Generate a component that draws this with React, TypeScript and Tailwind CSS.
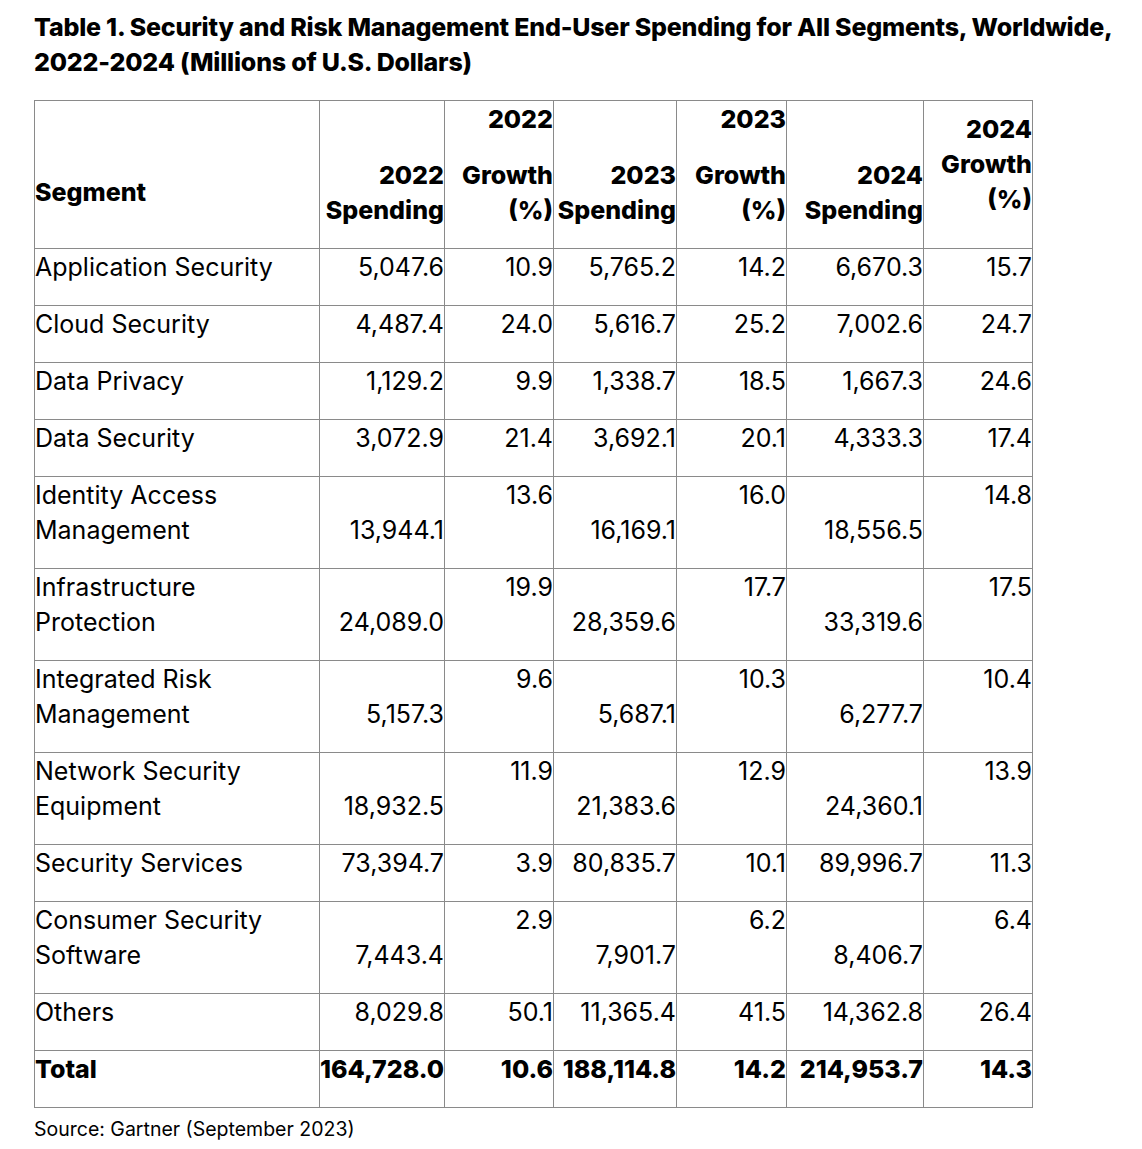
import React from "react";

type Row = { name: string[]; v: string[]; two?: boolean; bold?: boolean };

const rows: Row[] = [
  { name: ["Application Security"], v: ["5,047.6", "10.9", "5,765.2", "14.2", "6,670.3", "15.7"] },
  { name: ["Cloud Security"], v: ["4,487.4", "24.0", "5,616.7", "25.2", "7,002.6", "24.7"] },
  { name: ["Data Privacy"], v: ["1,129.2", "9.9", "1,338.7", "18.5", "1,667.3", "24.6"] },
  { name: ["Data Security"], v: ["3,072.9", "21.4", "3,692.1", "20.1", "4,333.3", "17.4"] },
  { name: ["Identity Access", "Management"], two: true, v: ["13,944.1", "13.6", "16,169.1", "16.0", "18,556.5", "14.8"] },
  { name: ["Infrastructure", "Protection"], two: true, v: ["24,089.0", "19.9", "28,359.6", "17.7", "33,319.6", "17.5"] },
  { name: ["Integrated Risk", "Management"], two: true, v: ["5,157.3", "9.6", "5,687.1", "10.3", "6,277.7", "10.4"] },
  { name: ["Network Security", "Equipment"], two: true, v: ["18,932.5", "11.9", "21,383.6", "12.9", "24,360.1", "13.9"] },
  { name: ["Security Services"], v: ["73,394.7", "3.9", "80,835.7", "10.1", "89,996.7", "11.3"] },
  { name: ["Consumer Security", "Software"], two: true, v: ["7,443.4", "2.9", "7,901.7", "6.2", "8,406.7", "6.4"] },
  { name: ["Others"], v: ["8,029.8", "50.1", "11,365.4", "41.5", "14,362.8", "26.4"] },
  { name: ["Total"], bold: true, v: ["164,728.0", "10.6", "188,114.8", "14.2", "214,953.7", "14.3"] },
];

const cell = "border-l border-t border-[#8a8a8a]";

export default function App() {
  return (
    <div
      className="bg-white text-black w-[1142px] min-h-[1149px] pl-[34px] pt-[10px]"
      style={{ fontFamily: "Inter, 'Noto Sans', sans-serif" }}
    >
      <h1 className="text-[25px] leading-[35px] font-extrabold tracking-[-0.2px] w-[1100px]">
        Table 1. Security and Risk Management End-User Spending for All Segments, Worldwide, 2022-2024 (Millions of
        U.S. Dollars)
      </h1>
      <div className="mt-[20px] w-[999px] grid grid-cols-[285px_125px_109px_123px_110px_137px_109px] border-r border-b border-[#8a8a8a] text-[25px] leading-[35px]">
        {/* header */}
        <div className={`${cell} h-[148px] font-extrabold flex items-start pt-[74px]`}>Segment</div>
        <div className={`${cell} font-extrabold text-right pt-[57px]`}>
          <div>2022</div>
          <div>Spending</div>
        </div>
        <div className={`${cell} font-extrabold text-right pt-[1px]`}>
          <div>2022</div>
          <div className="mt-[21px]">Growth</div>
          <div>(%)</div>
        </div>
        <div className={`${cell} font-extrabold text-right pt-[57px]`}>
          <div>2023</div>
          <div>Spending</div>
        </div>
        <div className={`${cell} font-extrabold text-right pt-[1px]`}>
          <div>2023</div>
          <div className="mt-[21px]">Growth</div>
          <div>(%)</div>
        </div>
        <div className={`${cell} font-extrabold text-right pt-[57px]`}>
          <div>2024</div>
          <div>Spending</div>
        </div>
        <div className={`${cell} font-extrabold text-right pt-[11px]`}>
          <div>2024</div>
          <div>Growth</div>
          <div>(%)</div>
        </div>
        {rows.map((r, i) => (
          <React.Fragment key={i}>
            <div className={`${cell} ${r.two ? "h-[92px]" : "h-[57px]"} ${r.bold ? "font-extrabold" : ""} pt-[1px]`}>
              {r.name.map((n, j) => (
                <div key={j}>{n}</div>
              ))}
            </div>
            {r.v.map((v, j) => (
              <div
                key={j}
                className={`${cell} text-right ${r.bold ? "font-extrabold" : ""} ${
                  r.two && j % 2 === 0 ? "pt-[36px]" : "pt-[1px]"
                }`}
              >
                {v}
              </div>
            ))}
          </React.Fragment>
        ))}
      </div>
      <p className="mt-[8px] text-[19.5px] leading-[26px]">Source: Gartner (September 2023)</p>
    </div>
  );
}
